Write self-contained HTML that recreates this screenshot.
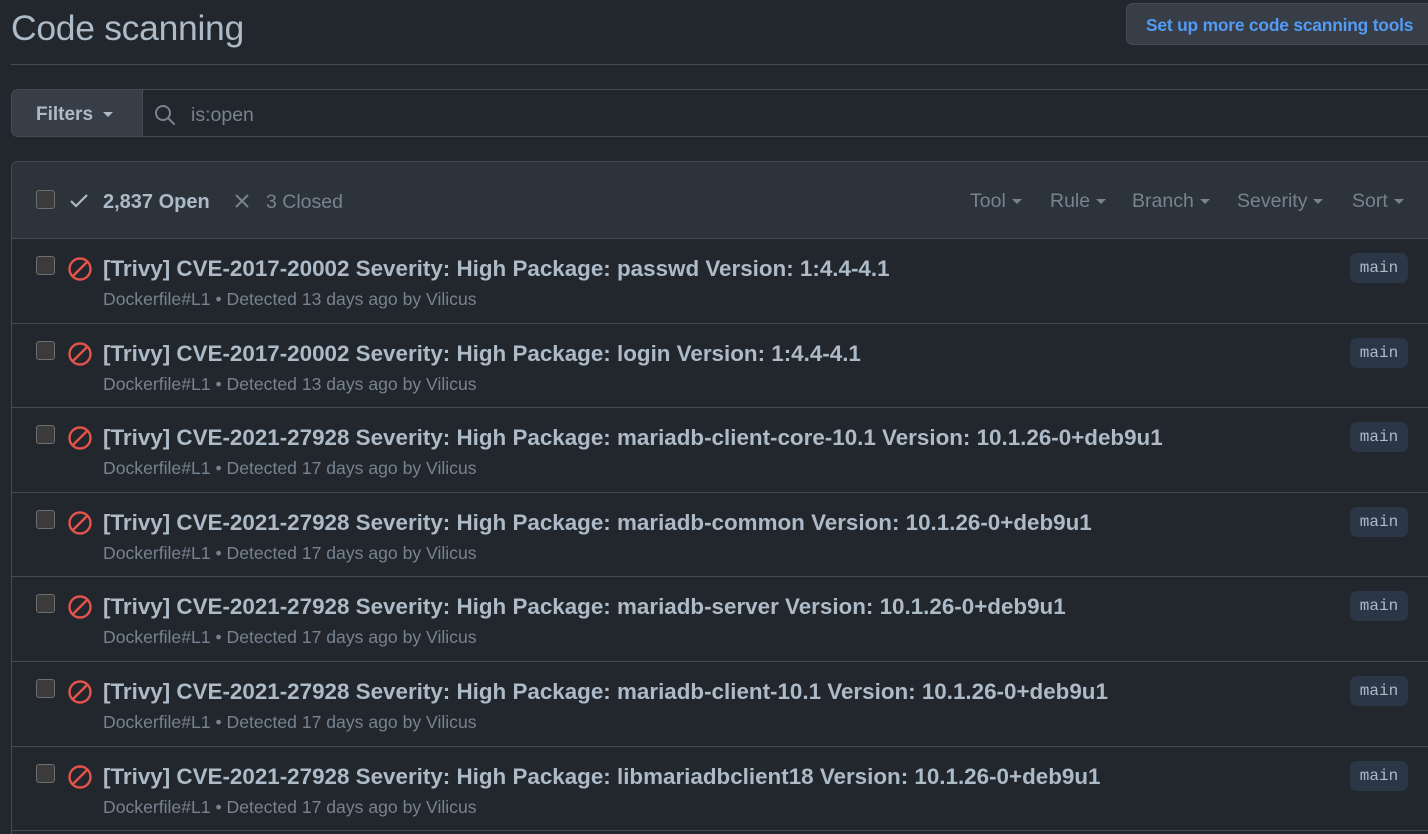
<!DOCTYPE html>
<html><head><meta charset="utf-8"><style>
*{box-sizing:border-box;margin:0;padding:0}
html,body{width:1428px;height:834px;overflow:hidden}
body{background:#22272e;font-family:"Liberation Sans",sans-serif;color:#adbac7;position:relative}
.abs{position:absolute}
h1{position:absolute;left:11px;top:8px;font-size:35.5px;font-weight:400;color:#adbac7;letter-spacing:-0.3px}
.setup{left:1126px;top:3px;width:320px;height:42px;background:#373e47;border:1px solid #444c56;border-radius:7px;color:#539bf5;font-size:17.4px;font-weight:700;padding:11px 0 0 19px;letter-spacing:-0.2px}
.hr{left:11px;top:64px;width:1420px;height:1px;background:#444c56}
.filt{left:11px;top:89px;width:1430px;height:48px;border:1px solid #444c56;border-radius:7px;background:#22272e;overflow:hidden}
.fbtn{position:absolute;left:0;top:0;width:131px;height:46px;background:#373e47;border-right:1px solid #444c56;font-size:19px;font-weight:700;padding:14px 0 0 24px}
.caret{display:inline-block;width:0;height:0;border-left:5px solid transparent;border-right:5px solid transparent;border-top:5px solid #768390;vertical-align:middle;margin-left:6px}
.fbtn .caret{border-top-color:#adbac7;margin-left:10px}
.q{position:absolute;left:179px;top:14px;font-size:19.5px;color:#768390}
.box{left:11px;top:161px;width:1430px;height:700px;border:1px solid #444c56;border-radius:7px;overflow:hidden}
.head{height:77px;background:#2d333b;border-bottom:1px solid #444c56;position:relative}
.cb{position:absolute;width:19px;height:19px;background:#3b3b3b;border:1px solid #6e6e6e;border-radius:3px}
.row{height:84.6px;border-bottom:1px solid #444c56;position:relative}
.t{position:absolute;left:91px;top:17px;font-size:22.4px;font-weight:700;color:#adbac7;white-space:nowrap}
.m{position:absolute;left:91px;top:50px;font-size:17.6px;color:#768390;white-space:nowrap}
.badge{position:absolute;left:1338px;top:14px;width:58px;height:30px;border-radius:7px;background:#2b3646;font-family:"Liberation Mono",monospace;font-size:16px;color:#adbac7;text-align:center;line-height:30px}
.dd{position:absolute;top:28px;font-size:19.5px;color:#768390;white-space:nowrap}
</style></head><body>
<h1>Code scanning</h1>
<div class="abs setup">Set up more code scanning tools</div>
<div class="abs hr"></div>
<div class="abs filt"><div class="fbtn">Filters<span class="caret"></span></div>
<svg class="abs" style="left:142px;top:14px" width="22" height="22" viewBox="0 0 22 22"><circle cx="9" cy="9" r="7" fill="none" stroke="#768390" stroke-width="2"/><path d="M14 14l6 6" stroke="#768390" stroke-width="2" stroke-linecap="round"/></svg>
<div class="q">is:open</div></div>
<div class="abs box">
<div class="head">
<div class="cb" style="left:24px;top:28px"></div>
<svg class="abs" style="left:57px;top:31px" width="20" height="16" viewBox="0 0 20 16"><path d="M2 8l5 5L18 2" fill="none" stroke="#adbac7" stroke-width="2.2"/></svg>
<div class="abs" style="left:91px;top:29px;font-size:20px;font-weight:700;color:#adbac7">2,837 Open</div>
<svg class="abs" style="left:223px;top:32px" width="14" height="14" viewBox="0 0 14 14"><path d="M1 1l12 12M13 1L1 13" stroke="#768390" stroke-width="2"/></svg>
<div class="abs" style="left:254px;top:29px;font-size:19.5px;color:#768390">3 Closed</div>
<div class="dd" style="left:958px">Tool<span class="caret"></span></div>
<div class="dd" style="left:1038px">Rule<span class="caret"></span></div>
<div class="dd" style="left:1120px">Branch<span class="caret"></span></div>
<div class="dd" style="left:1225px">Severity<span class="caret"></span></div>
<div class="dd" style="left:1340px">Sort<span class="caret"></span></div>
</div>
<div id="rows"></div>
</div>
<script>
var d=[["CVE-2017-20002","passwd Version: 1:4.4-4.1",13],["CVE-2017-20002","login Version: 1:4.4-4.1",13],["CVE-2021-27928","mariadb-client-core-10.1 Version: 10.1.26-0+deb9u1",17],["CVE-2021-27928","mariadb-common Version: 10.1.26-0+deb9u1",17],["CVE-2021-27928","mariadb-server Version: 10.1.26-0+deb9u1",17],["CVE-2021-27928","mariadb-client-10.1 Version: 10.1.26-0+deb9u1",17],["CVE-2021-27928","libmariadbclient18 Version: 10.1.26-0+deb9u1",17]];
var h="";d.forEach(function(r){h+='<div class="row"><div class="cb" style="left:24px;top:17px"></div><svg class="abs" style="left:55px;top:17px" width="26" height="26" viewBox="0 0 26 26"><circle cx="13" cy="13" r="10.5" fill="none" stroke="#e5534b" stroke-width="2.4"/><path d="M5.6 20.4L20.4 5.6" stroke="#e5534b" stroke-width="2.4"/></svg><div class="t">[Trivy] '+r[0]+' Severity: High Package: '+r[1]+'</div><div class="m">Dockerfile#L1 • Detected '+r[2]+' days ago by Vilicus</div><div class="badge">main</div></div>'});
document.getElementById("rows").innerHTML=h;
</script>
</body></html>
